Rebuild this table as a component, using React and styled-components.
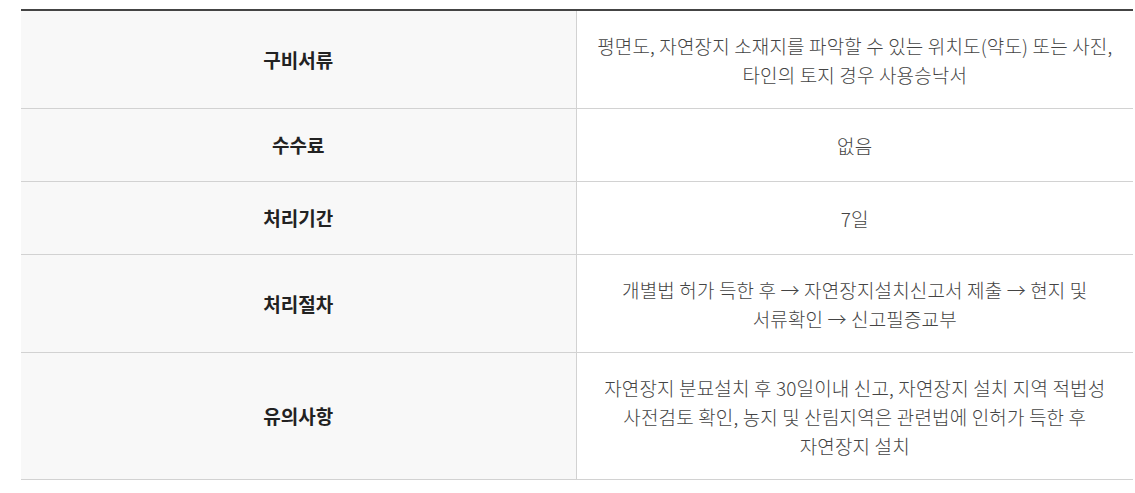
import React from "react";
import styled, { createGlobalStyle } from "styled-components";

const GlobalStyle = createGlobalStyle`
  html, body {
    margin: 0;
    padding: 0;
    background: #fff;
  }
  body {
    font-family: "Noto Sans CJK KR", "Noto Sans", sans-serif;
  }
`;

const Wrap = styled.div`
  padding: 9px 2px 0 21px;
`;

const Table = styled.table`
  width: 1112px;
  border-collapse: collapse;
  table-layout: fixed;
  border-top: 2px solid #444;
`;

const Row = styled.tr`
  border-bottom: 1px solid #d2d2d2;
`;

const Head = styled.th`
  box-sizing: border-box;
  width: 555px;
  padding: 23px 10px;
  background: #f8f8f8;
  border-right: 1px solid #d2d2d2;
  color: #222;
  font-size: 19px;
  font-weight: 700;
  line-height: 26px;
  text-align: center;
  vertical-align: middle;
`;

const Cell = styled.td`
  padding: 19.5px 12px;
  color: #444;
  font-size: 19px;
  font-weight: 300;
  line-height: 29px;
  letter-spacing: 0.15px;
  text-align: center;
  vertical-align: middle;
`;

const rows = [
  {
    label: "구비서류",
    value: ["평면도, 자연장지 소재지를 파악할 수 있는 위치도(약도) 또는 사진,", "타인의 토지 경우 사용승낙서"],
  },
  { label: "수수료", value: ["없음"] },
  { label: "처리기간", value: ["7일"] },
  {
    label: "처리절차",
    value: ["개별법 허가 득한 후 → 자연장지설치신고서 제출 → 현지 및", "서류확인 → 신고필증교부"],
  },
  {
    label: "유의사항",
    value: [
      "자연장지 분묘설치 후 30일이내 신고, 자연장지 설치 지역 적법성",
      "사전검토 확인, 농지 및 산림지역은 관련법에 인허가 득한 후",
      "자연장지 설치",
    ],
  },
];

export default function App() {
  return (
    <Wrap>
      <GlobalStyle />
      <Table>
        <tbody>
          {rows.map((r) => (
            <Row key={r.label}>
              <Head scope="row">{r.label}</Head>
              <Cell>
                {r.value.map((line, i) => (
                  <React.Fragment key={i}>
                    {i > 0 && <br />}
                    {line}
                  </React.Fragment>
                ))}
              </Cell>
            </Row>
          ))}
        </tbody>
      </Table>
    </Wrap>
  );
}
